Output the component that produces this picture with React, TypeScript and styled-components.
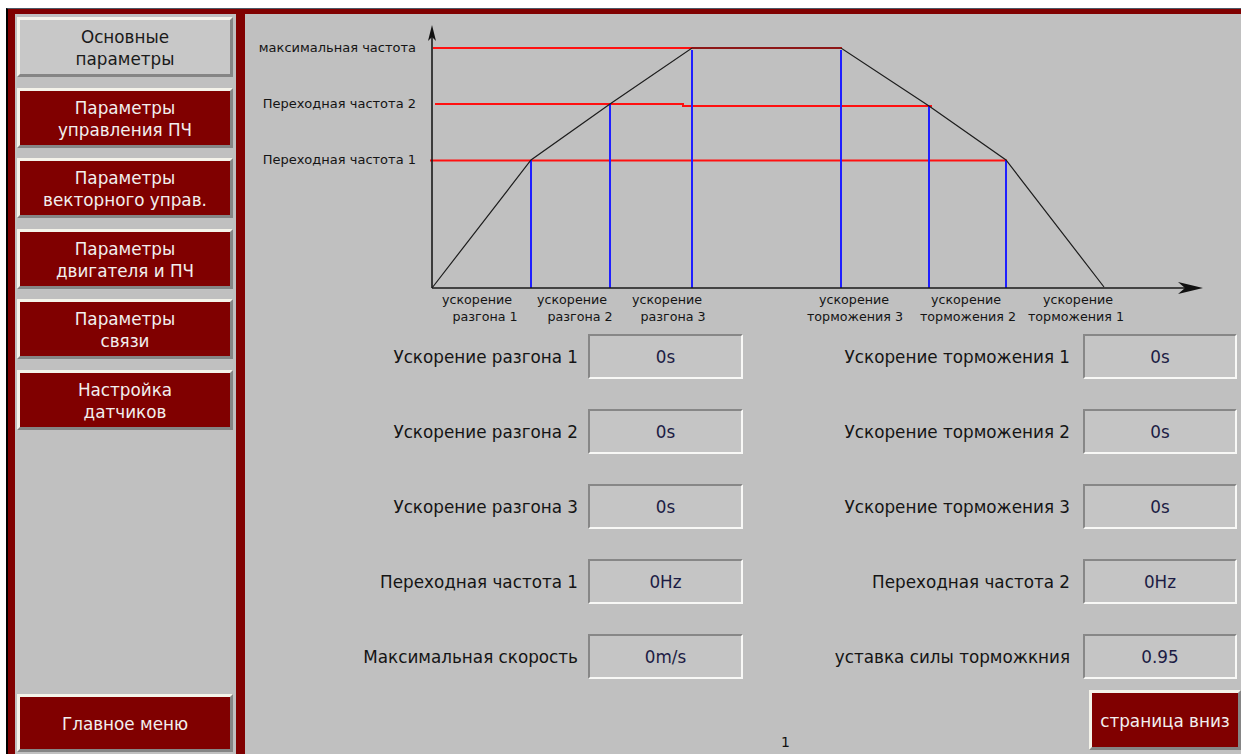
import React from 'react'
import styled, { createGlobalStyle } from 'styled-components'

const GlobalStyle = createGlobalStyle`
    html, body {
        margin: 0;
        padding: 0;
        background: #ffffff;
        overflow: hidden;
    }
    body {
        font-family: "DejaVu Sans", "Liberation Sans", sans-serif;
    }
`

const Screen = styled.div`
    box-sizing: border-box;
    margin: 8px 0 0 6px;
    height: calc(100vh - 8px);
    border-left: 2px solid #000000;
    border-top: 1px solid #4c5866;
    background: #800000;
    padding: 5px 0 0 7px;

    display: grid;
    grid-template-columns: 221px 1fr;
    column-gap: 9px;
    overflow: hidden;
`

const Sidebar = styled.nav`
    background: #c0c0c0;
    padding: 3px 3px 2px 2px;

    display: flex;
    flex-direction: column;
    gap: 10.6px;
`

const NavButton = styled.button<{ $active?: boolean; $tall?: number }>`
    box-sizing: border-box;
    width: 100%;
    height: ${({ $tall }) => $tall ?? 60}px;
    flex-shrink: 0;
    margin: 0;
    padding: 2px 0 0;
    border: 3px solid;
    border-color: #f4f3ea #858585 #858585 #f4f3ea;
    background: ${({ $active }) => ($active ? '#c8c8c8' : '#800000')};
    color: ${({ $active }) => ($active ? '#1a1a1a' : '#f2efee')};

    display: flex;
    flex-direction: column;
    align-items: center;
    justify-content: center;

    font-family: "DejaVu Sans", "Liberation Sans", sans-serif;
    font-size: 16.8px;
    line-height: 22px;
    cursor: pointer;
`

const MenuButton = styled(NavButton)`
    margin-top: auto;
`

const Main = styled.main`
    background: #c0c0c0;
    display: flex;
    flex-direction: column;
    overflow: hidden;
`

const Chart = styled.svg`
    display: block;
    flex-shrink: 0;
    font-family: "DejaVu Sans", "Liberation Sans", sans-serif;
`

const Form = styled.div`
    display: grid;
    grid-template-columns: 343px 155px 340px 154px;
    grid-auto-rows: 45px;
    row-gap: 30px;
`

const FieldLabel = styled.div<{ $gap: number }>`
    display: flex;
    align-items: center;
    justify-content: flex-end;
    padding-right: ${({ $gap }) => $gap}px;
    font-size: 16.8px;
    color: #141414;
    white-space: nowrap;
`

const ValueBox = styled.div`
    box-sizing: border-box;
    border: 2px solid;
    border-color: #878787 #f8f8f6 #f8f8f6 #878787;
    background: #c5c5c5;

    display: flex;
    align-items: center;
    justify-content: center;
    font-size: 16.8px;
    color: #1c1c44;
`

const Footer = styled.div`
    margin-top: 11px;
    height: 60px;
    display: grid;
    grid-template-columns: 1fr 152px;
`

const PageNo = styled.span`
    align-self: end;
    padding-left: 536px;
    font-size: 14px;
    line-height: 16px;
    color: #111111;
`

const PageButton = styled(NavButton)`
    width: 152px;
    height: 60px;
`

const menu = [
    ['Параметры', 'управления ПЧ'],
    ['Параметры', 'векторного управ.'],
    ['Параметры', 'двигателя и ПЧ'],
    ['Параметры', 'связи'],
    ['Настройка', 'датчиков'],
]

const rows = [
    ['Ускорение разгона 1', '0s', 'Ускорение торможения 1', '0s'],
    ['Ускорение разгона 2', '0s', 'Ускорение торможения 2', '0s'],
    ['Ускорение разгона 3', '0s', 'Ускорение торможения 3', '0s'],
    ['Переходная частота 1', '0Hz', 'Переходная частота 2', '0Hz'],
    ['Максимальная скорость', '0m/s', 'уставка силы торможкния', '0.95'],
]

// axis captions under the time axis: [x of first line, x of second line, second line]
const stages: [number, number, string][] = [
    [232, 240, 'разгона 1'],
    [327, 335, 'разгона 2'],
    [422, 428, 'разгона 3'],
    [609, 610, 'торможения 3'],
    [721, 723, 'торможения 2'],
    [833, 831, 'торможения 1'],
]

const FreqChart = () => (
    <Chart width={996} height={320} viewBox='0 0 996 320'>
        {/* frequency levels */}
        <g stroke='#ff1010' strokeWidth={2} fill='none'>
            <line x1={188} y1={34} x2={597} y2={34} />
            <polyline points='190,90 438,90 438,92 687,92' />
            <line x1={185} y1={146.5} x2={762} y2={146.5} />
        </g>

        {/* stage boundaries */}
        <g stroke='#1f1fff' strokeWidth={2}>
            <line x1={286} y1={146} x2={286} y2={274} />
            <line x1={365} y1={90} x2={365} y2={274} />
            <line x1={447} y1={36} x2={447} y2={274} />
            <line x1={596} y1={36} x2={596} y2={274} />
            <line x1={684} y1={92} x2={684} y2={274} />
            <line x1={761} y1={146} x2={761} y2={274} />
        </g>

        {/* speed profile */}
        <polyline
            points='187,274 286,146 365,90 447,34 596,34 684,92 761,146 859,273'
            fill='none'
            stroke='#1c1c1c'
            strokeWidth={1.2}
        />

        {/* axes */}
        <g stroke='#1a1a1a' strokeWidth={1.6}>
            <line x1={187} y1={16} x2={187} y2={274} />
            <line x1={187} y1={274} x2={950} y2={274} />
        </g>
        <polygon points='187,11 183,27 187,23 191,27' fill='#111' />
        <polygon points='958,274 933,268 940,274 933,280' fill='#111' />

        <g fontSize={13} fill='#141414' textAnchor='end'>
            <text x={171} y={38}>максимальная частота</text>
            <text x={171} y={94}>Переходная частота 2</text>
            <text x={171} y={150}>Переходная частота 1</text>
        </g>

        <g fontSize={12.7} fill='#141414' textAnchor='middle'>
            {stages.map(([x1, x2, second]) => (
                <React.Fragment key={second}>
                    <text x={x1} y={290}>ускорение</text>
                    <text x={x2} y={307}>{second}</text>
                </React.Fragment>
            ))}
        </g>
    </Chart>
)

const App = () => {
    return (
        <>
            <GlobalStyle />
            <Screen>
                <Sidebar>
                    <NavButton $active>
                        <span>Основные</span>
                        <span>параметры</span>
                    </NavButton>
                    {menu.map(([a, b]) => (
                        <NavButton key={b}>
                            <span>{a}</span>
                            <span>{b}</span>
                        </NavButton>
                    ))}
                    <MenuButton $tall={58}>Главное меню</MenuButton>
                </Sidebar>

                <Main>
                    <FreqChart />
                    <Form>
                        {rows.map(([l1, v1, l2, v2]) => (
                            <React.Fragment key={l1}>
                                <FieldLabel $gap={10}>{l1}</FieldLabel>
                                <ValueBox>{v1}</ValueBox>
                                <FieldLabel $gap={13}>{l2}</FieldLabel>
                                <ValueBox>{v2}</ValueBox>
                            </React.Fragment>
                        ))}
                    </Form>
                    <Footer>
                        <PageNo>1</PageNo>
                        <PageButton>страница вниз</PageButton>
                    </Footer>
                </Main>
            </Screen>
        </>
    )
}

export default App
